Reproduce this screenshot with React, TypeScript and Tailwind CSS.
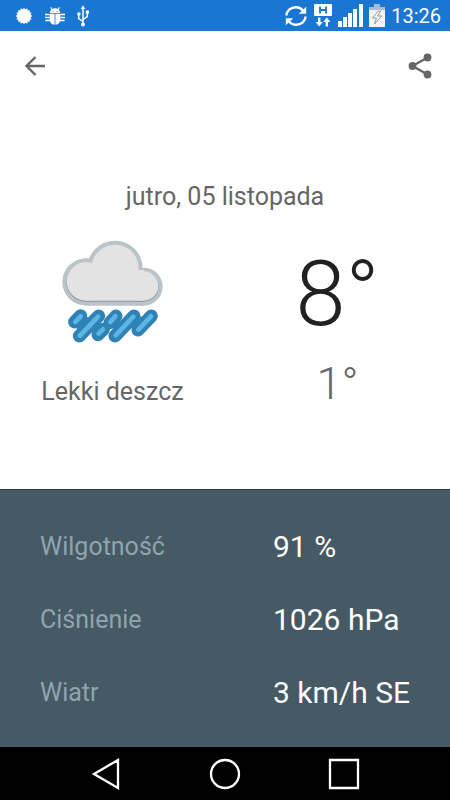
const details = [
  { label: "Wilgotność", value: "91 %" },
  { label: "Ciśnienie", value: "1026 hPa" },
  { label: "Wiatr", value: "3 km/h SE" },
];

const rays = Array.from({ length: 16 }, (_, i) => i * 22.5);

function SunIcon() {
  return (
    <svg width="18" height="18" viewBox="0 0 18 18" fill="#fff">
      <circle cx="9" cy="9" r="7" />
      {rays.map(angle => (
        <path key={angle} d="M7.6 2.6 9 .7l1.4 1.9z" transform={`rotate(${angle} 9 9)`} />
      ))}
    </svg>
  );
}

function BugIcon() {
  return (
    <svg width="20" height="18" viewBox="0 0 20 18" fill="#fff">
      <path d="M5 6a5 4.8 0 0 1 10 0z" />
      <path d="M7 2.6 5.6.4M13 2.6 14.4.4" stroke="#fff" strokeWidth="1.1" />
      <path d="M4.6 6.8h5v11C6.4 17.6 4.6 15 4.6 12zM10.4 6.8h5V12c0 3-1.8 5.600-5 5.800z" />
      <path d="M0 7.5h4.500M0 10.500h4.500M.4 13.500h4.800M20 7.500h-4.500M20 10.500h-4.500M19.600 13.500h-4.800" stroke="#fff" strokeWidth="1.4" />
      <path d="M7.500 4.300h1M11.500 4.300h1" stroke="#1976d2" strokeWidth="1" />
    </svg>
  );
}

function UsbIcon() {
  return (
    <svg width="12" height="22" viewBox="0 0 12 22" fill="none" stroke="#fff" strokeWidth="1.5">
      <path d="M6 3v16M6 16.5l-4.300-3V9.500M6 14.500l4.300-3V7" />
      <path d="M6 .2 8.300 4H3.700z" fill="#fff" stroke="none" />
      <circle cx="6" cy="19.500" r="2" fill="#fff" stroke="none" />
      <circle cx="1.900" cy="9" r="1.800" fill="#fff" stroke="none" />
      <path d="M8.700 5.500h3.200v3.200H8.700z" fill="#fff" stroke="none" />
    </svg>
  );
}

function SyncIcon() {
  return (
    <svg width="24" height="22" viewBox="0 0 24 22" fill="none" stroke="#fff" strokeWidth="2.4">
      <path d="M2.400 10.500C2.600 5.800 6.600 2.200 11.700 2.200c3.300 0 6 1.500 7.700 3.900" />
      <path d="M21.600 11.500c-.2 4.700-4.200 8.300-9.300 8.300-3.300 0-6-1.500-7.700-3.900" />
      <path d="M22.200 1.800v7h-7.400zM1.800 20.200v-7h7.400z" fill="#fff" stroke="none" />
    </svg>
  );
}

function DataIcon() {
  return (
    <svg width="18" height="23" viewBox="0 0 18 23" fill="#fff">
      <rect width="18" height="12" rx="1" />
      <path d="M6 2.500v7M12 2.500v7M6 6h6" stroke="#1976d2" strokeWidth="1.8" fill="none" />
      <path d="M4 13.500h2.400V18h2.400l-3.600 4.600L1.600 18H4zM11.600 22.600H14V18h2.400l-3.600-4.600L9.200 18h2.400z" />
    </svg>
  );
}

function SignalIcon() {
  return (
    <svg width="25" height="23" viewBox="0 0 25 23" fill="#fff">
      <path d="M0 17h4v6H0zM5 13h4v10H5zM10 9h4v14h-4zM15 5h4v18h-4zM21 0h4v23h-4z" />
    </svg>
  );
}

function BatteryIcon() {
  return (
    <svg width="16" height="23" viewBox="0 0 16 23">
      <path d="M5 0h6v3h5v3H0V3h5z" fill="#a9bdd2" />
      <path d="M0 6h16v17H0z" fill="#f4f4f4" />
      <path d="M9.500 7 3.500 14h4l-2 6 7-8H8.500l3-5z" fill="#fff" stroke="#8a8a8a" strokeWidth=".9" />
    </svg>
  );
}

function RainCloud() {
  return (
    <svg width="102" height="104" viewBox="36 30 306 312" role="img" aria-label="Lekki deszcz">
      <g fill="#bac3c8">
        <circle cx="108" cy="156" r="71" />
        <circle cx="195" cy="115" r="83" />
        <circle cx="281" cy="170" r="57" />
        <path d="M108 120h173v107H108z" />
      </g>
      <g fill="#8b979d">
        <circle cx="108" cy="156" r="59" />
        <circle cx="281" cy="170" r="45" />
        <path d="M108 130h173v85H108z" />
      </g>
      <g fill="#e3e3e3">
        <circle cx="108" cy="154" r="58" />
        <circle cx="195" cy="115" r="71" />
        <circle cx="281" cy="168" r="44" />
        <path d="M108 120h173v92H108z" />
      </g>
      <g fill="none" strokeLinecap="round">
        <path
          d="M74 276l18-19M88 318l58-60M144 314l16-16M180 278l18-20M195 318l57-60M264 300l40-42"
          stroke="#2f82b5"
          strokeWidth="39"
        />
        <path d="M86 292l24-24M252 286l18-20" stroke="#2f82b5" strokeWidth="14" />
        <path
          d="M76 276l16-17M90 317l54-57M146 311l13-13M181 276l15-17M197 316l53-56M265 299l38-40"
          stroke="#5cb6e4"
          strokeWidth="14"
        />
      </g>
    </svg>
  );
}

function StatusBar() {
  return (
    <header className="flex h-[31px] items-center justify-between bg-[#1976d2] pr-[9px] pl-[15px] text-white">
      <div className="flex items-center gap-3">
        <SunIcon />
        <BugIcon />
        <UsbIcon />
      </div>
      <div className="flex items-center gap-[6px]">
        <SyncIcon />
        <DataIcon />
        <SignalIcon />
        <BatteryIcon />
        <span className="text-xl leading-6">13:26</span>
      </div>
    </header>
  );
}

function Toolbar() {
  return (
    <div className="flex h-[70px] items-center justify-between px-[14px] text-[#666666]">
      <button type="button" aria-label="Wstecz" className="flex h-10 w-10 items-center justify-center">
        <svg width="22" height="20" viewBox="0 0 22 20" fill="none" stroke="currentColor" strokeWidth="2.4">
          <path d="M22 10H4M12.500 1 3.500 10l9 9" />
        </svg>
      </button>
      <button type="button" aria-label="Udostępnij" className="flex h-10 w-8 items-center justify-center">
        <svg width="24" height="26" viewBox="0 0 24 26" fill="currentColor">
          <path d="M19.500 4.500 4.500 13l15 8.500" fill="none" stroke="currentColor" strokeWidth="2.3" />
          <circle cx="19.500" cy="4.500" r="3.900" />
          <circle cx="4.500" cy="13" r="3.900" />
          <circle cx="19.500" cy="21.500" r="3.900" />
        </svg>
      </button>
    </div>
  );
}

function NavBar() {
  return (
    <nav className="flex h-[53px] items-center justify-between bg-black px-[90px]">
      <button type="button" aria-label="Wróć">
        <svg width="32" height="32" viewBox="0 0 32 32" fill="none" stroke="#fff" strokeWidth="2.3">
          <path d="M28 2v28L4 16z" />
        </svg>
      </button>
      <button type="button" aria-label="Ekran główny">
        <svg width="32" height="32" viewBox="0 0 32 32" fill="none" stroke="#fff" strokeWidth="2.3">
          <circle cx="16" cy="16" r="14" />
        </svg>
      </button>
      <button type="button" aria-label="Ostatnie aplikacje">
        <svg width="32" height="32" viewBox="0 0 32 32" fill="none" stroke="#fff" strokeWidth="2.3">
          <path d="M2 2h28v28H2z" />
        </svg>
      </button>
    </nav>
  );
}

export default function App() {
  return (
    <div className="flex min-h-screen flex-col bg-white font-[Roboto,sans-serif]">
      <StatusBar />
      <Toolbar />
      <main className="flex flex-1 flex-col">
        <section className="flex-1 pt-20 text-[#666666]">
          <h1 className="text-center text-[25px] leading-8">jutro, 05 listopada</h1>
          <div className="mt-[27px] grid grid-cols-2 text-center">
            <div className="flex flex-col items-center">
              <RainCloud />
              <p className="mt-8 text-[25px] leading-8">Lekki deszcz</p>
            </div>
            <div className="flex flex-col items-center font-light">
              <p className="text-[90px] leading-[110px] text-[#212121]">8°</p>
              <p className="mt-2 text-[45px] leading-[52px]">1°</p>
            </div>
          </div>
        </section>
        <dl className="border-t border-[#1d3f4c] bg-[#455a64] pt-5 pb-[18px]">
          {details.map(item => (
            <div key={item.label} className="grid h-[73px] grid-cols-2 items-center">
              <dt className="pl-10 text-[25px] leading-8 text-[#90a4ae]">{item.label}</dt>
              <dd className="pl-12 text-[30px] leading-9 whitespace-nowrap text-white">{item.value}</dd>
            </div>
          ))}
        </dl>
      </main>
      <NavBar />
    </div>
  );
}
